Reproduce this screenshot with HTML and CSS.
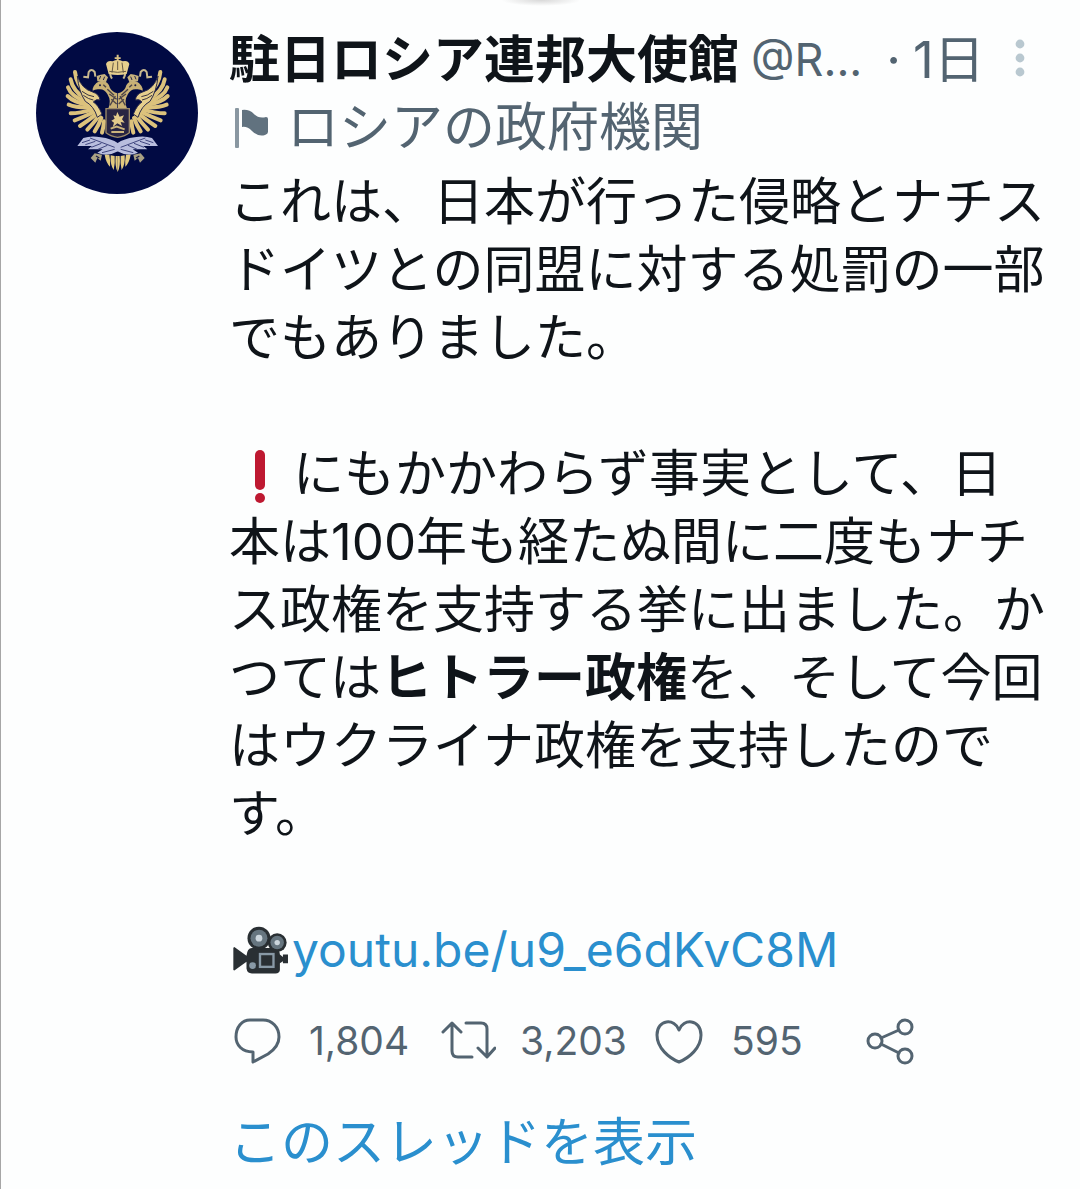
FILE: index.html
```
<!DOCTYPE html>
<html lang="ja">
<head>
    <meta charset="UTF-8">
    <meta name="viewport" content="width=device-width, initial-scale=1.0">
    <title>駐日ロシア連邦大使館</title>
    <link rel="stylesheet" href="styles.css">
</head>
<body>
    <article class="tweet">
        <svg class="avatar" viewBox="48 36 486 486" role="img" aria-label="駐日ロシア連邦大使館">
            <defs>
                <g id="eagle-half">
                    <!-- wing feathers -->
                    <g fill="none" stroke="#dcc27c" stroke-width="12" stroke-linecap="round">
                        <path d="M165 156 Q168 194 204 226"/>
                        <path d="M152 178 Q158 212 196 236"/>
                        <path d="M144 202 Q154 230 200 246"/>
                        <path d="M143 228 Q162 248 206 254"/>
                        <path d="M146 254 Q170 264 214 262"/>
                        <path d="M152 280 Q178 280 220 268"/>
                        <path d="M164 301 Q190 292 226 274"/>
                        <path d="M180 318 Q204 302 232 280"/>
                        <path d="M202 329 Q220 310 238 286"/>
                        <path d="M224 334 Q236 316 244 294"/>
                        <path d="M246 338 Q250 324 252 304"/>
                    </g>
                    <path d="M172 168 Q184 206 218 216 Q238 222 240 240 Q228 236 220 246 Q234 254 246 282 L232 292 Q222 258 196 244 Q176 214 172 168Z" fill="#e6cf8d" stroke="#2a2a4a" stroke-width="3"/>
                    <path d="M186 214 Q204 228 222 230 M190 226 Q206 238 220 240" fill="none" stroke="#3b3540" stroke-width="3"/>
                    <!-- head and neck -->
                    <path d="M218 206 Q226 184 246 182 Q266 184 270 204 Q276 216 292 220 L292 268 L264 268 Q276 244 262 222 Q254 208 240 208 Q226 206 218 212Z" fill="#c9b175"/>
                    <path d="M250 194 L258 202 M262 208 L282 226 M268 222 L290 238 M274 238 L290 252 M286 228 L270 256" stroke="#4b4348" stroke-width="4"/>
                    <path d="M232 184 L230 168 L242 164 L254 162 L264 172 L258 186Z" fill="#c8b37e"/>
                    <path d="M238 178 L242 168 M250 180 L254 170" stroke="#2a2a4a" stroke-width="3"/>
                    <circle cx="240" cy="196" r="3" fill="#1b1c45"/>
                    <!-- ribbon -->
                    <path d="M190 170 L204 172 L206 156 Q214 144 224 156 L226 170 M272 150 Q268 164 276 176" fill="none" stroke="#c8b98f" stroke-width="6"/>
                    <!-- palm branch -->
                    <path d="M172 378 L190 354 Q214 346 242 352 Q274 356 294 370 L294 394 Q262 412 232 398 L248 388 L204 388 L216 378Z" fill="#b9bede"/>
                    <path d="M186 368 L210 360 M196 374 L226 364 M214 382 L244 370 M234 388 L262 376 M210 354 L284 382 M246 398 L284 388" stroke="#40467f" stroke-width="3"/>
                    <!-- claw and tail -->
                    <path d="M212 414 L224 400 L246 404 L242 422 L232 414 L226 428Z" fill="#a9a083"/>
                    <path d="M228 408 L238 414" stroke="#1b1c45" stroke-width="4"/>
                    <path d="M254 404 Q258 428 270 440 Q272 424 268 404Z M272 406 Q270 434 281 450 Q286 430 284 408Z M287 408 L293 408 L293 456 Q284 440 287 408Z" fill="#e2c97f"/>
                </g>
            </defs>
            <circle cx="291" cy="279" r="243" fill="#010a43"/>
            <use href="#eagle-half"/>
            <use href="#eagle-half" transform="translate(586 0) scale(-1 1)"/>
            <!-- crown -->
            <path d="M290 104 H296 V112 H302 V117 H296 V124 H290 V117 H284 V112 H290Z" fill="#d8c184"/>
            <path d="M258 132 Q262 120 278 124 Q293 116 308 124 Q324 120 328 132 L320 162 Q293 168 266 162Z" fill="#e6cf8d"/>
            <path d="M280 128 L276 158 M293 124 V150 M306 128 L310 158 M268 154 Q293 160 318 154" fill="none" stroke="#675a45" stroke-width="3"/>
            <!-- shield -->
            <path d="M258 266 H328 V338 Q316 348 293 352 Q270 348 258 338Z" fill="#282443" stroke="#9c8a68" stroke-width="4"/>
            <path d="M274 302 L284 296 L280 286 L288 288 L292 276 L299 290 L312 286 L306 298 L314 308 L302 306 L306 318 L292 310 L278 322 L282 308Z" fill="#e3ca8b"/>
            <path d="M272 326 L290 320 L314 328 M274 336 H312" fill="none" stroke="#cbb47d" stroke-width="6"/>
        </svg>

        <div class="content">
            <header class="header">
                <span class="name">駐日ロシア連邦大使館</span>
                <span class="handle">@R...</span>
                <span class="dot">·</span>
                <span class="time">1日</span>
                <button class="more" type="button" aria-label="その他">
                    <svg viewBox="0 0 10 38">
                        <circle cx="5" cy="5" r="4.4"/>
                        <circle cx="5" cy="19" r="4.4"/>
                        <circle cx="5" cy="33" r="4.4"/>
                    </svg>
                </button>
            </header>

            <p class="label">
                <svg class="flag" viewBox="0 0 38 42">
                    <rect x="2" y="1" width="4" height="40" rx="1" fill="#8997a1"/>
                    <path d="M9 3 Q16 2 21 7 Q26 12 33 10 Q35 10 35 12 V25 Q35 27 32 28 Q25 30 19 24 Q14 19 9 20Z"/>
                </svg>
                <span>ロシアの政府機関</span>
            </p>

            <div class="text">
                <p>これは、日本が行った侵略とナチスドイツとの同盟に対する処罰の一部でもありました。</p>
                <p><svg class="emoji" viewBox="0 0 64 56" role="img" aria-label="!"><rect x="26" y="2" width="10" height="40" rx="5" fill="#be1931"/><circle cx="31" cy="50" r="5" fill="#be1931"/></svg>にもかかわらず事実として、日本は100年も経たぬ間に二度もナチス政権を支持する挙に出ました。かつては<b>ヒトラー政権</b>を、そして今回はウクライナ政権を支持したのです。</p>
                <p class="video">
                    <svg class="camera" viewBox="40 54 166 142">
                        <path d="M41 118 L44 116 L80 142 Q82 120 96 119 H164 Q178 120 179 138 L188 146 V138 H203 V164 H188 V158 L179 164 V184 Q178 194 166 195 H96 Q82 194 80 180 V160 L44 186 L41 184Z" fill="#292f33"/>
                        <circle cx="117" cy="90" r="34" fill="#292f33"/>
                        <circle cx="171" cy="103" r="28" fill="#292f33"/>
                        <circle cx="117" cy="90" r="25" fill="#66757f"/>
                        <circle cx="171" cy="103" r="20" fill="#66757f"/>
                        <circle cx="117" cy="90" r="10" fill="#ccd6dd"/>
                        <circle cx="171" cy="103" r="8" fill="#ccd6dd"/>
                        <rect x="120" y="137" width="40" height="38" fill="#292f33" stroke="#8899a6" stroke-width="7"/>
                        <circle cx="98" cy="171" r="10" fill="#8899a6"/>
                    </svg><a href="#">youtu.be/u9_e6dKvC8M</a>
                </p>
            </div>

            <div class="actions">
                <button class="action" type="button" aria-label="返信 1,804">
                    <svg viewBox="0 0 56 56"><path d="M21 7 H34 C43 7 50 14 50 24 C50 32 45 37 39 41 L24 49 V39 C13 39 7 32 7 24 C7 14 13 7 21 7Z"/></svg>
                    <span>1,804</span>
                </button>
                <button class="action" type="button" aria-label="リツイート 3,203">
                    <svg viewBox="0 0 56 56"><path d="M3 19 L12 10 L21 19 M12 11 V38 Q12 44 18 44 H32 M26 10 H41 Q47 10 47 16 V43 M38 35 L47 44 L55 35"/></svg>
                    <span>3,203</span>
                </button>
                <button class="action" type="button" aria-label="いいね 595">
                    <svg viewBox="0 0 56 56"><path d="M28 17 C24 5 6 6 6 22 C6 35 18 45 28 49 C38 45 50 35 50 22 C50 6 32 5 28 17Z"/></svg>
                    <span>595</span>
                </button>
                <button class="action" type="button" aria-label="共有">
                    <svg viewBox="0 0 56 56"><circle cx="13" cy="28" r="7"/><circle cx="43" cy="14" r="7"/><circle cx="43" cy="43" r="7"/><path d="M19 25 L37 17 M19 31 L37 40"/></svg>
                </button>
            </div>

            <a class="thread" href="#">このスレッドを表示</a>
        </div>
    </article>
</body>
</html>
```

FILE: styles.css
```
* {
    margin: 0;
    padding: 0;
    box-sizing: border-box;
}

body {
    position: relative;
    min-height: 100vh;
    border-left: 1px solid #a6a6a6;
    background-color: #fdfefe;
    color: #0f1419;
    font-family: Inter, "Noto Sans CJK JP", sans-serif;
    font-size: 51px;
    line-height: 68px;
    overflow-x: hidden;
}

/* soft shadow peeking in from the top edge */
body::before {
    content: "";
    position: absolute;
    top: 0;
    left: 50%;
    width: 80px;
    height: 6px;
    margin-left: -40px;
    background: radial-gradient(ellipse at top, #d8d8d8, transparent 70%);
}

a {
    color: #2a8fce;
    text-decoration: none;
}

button {
    border: none;
    background: none;
    color: inherit;
    font-family: inherit;
    cursor: pointer;
}

.tweet {
    display: flex;
    gap: 31px;
    padding: 26px 31px 0 35px;
}

.avatar {
    flex: none;
    width: 162px;
    height: 162px;
    margin-top: 6px;
}

.content {
    flex: 1;
    min-width: 0;
}

.header {
    display: flex;
    align-items: center;
    color: #536471;
    white-space: nowrap;
}

.name {
    color: #0f1419;
    font-weight: bold;
}

.handle {
    margin-left: 12px;
    font-size: 45px;
}

.dot {
    margin-left: 24px;
}

.time {
    margin-left: 12px;
}

.more {
    display: flex;
    margin-left: auto;
    padding: 0 24px 4px;
}

.more svg {
    width: 10px;
    height: 38px;
    fill: #b9c8d0;
}

.label {
    display: flex;
    align-items: center;
    gap: 16px;
    color: #536471;
    font-size: 52px;
}

.flag {
    width: 38px;
    height: 42px;
    margin-left: 4px;
    fill: #61727f;
}

.text {
    margin-top: 6px;
}

.text p + p {
    margin-top: 68px;
}

.emoji {
    width: 64px;
    height: 56px;
    vertical-align: -12px;
}

.video {
    display: flex;
    align-items: center;
    font-size: 48px;
}

.camera {
    flex: none;
    width: 56px;
    height: 48px;
    margin-left: 4px;
    margin-right: 3px;
}

.actions {
    display: flex;
    margin-top: 29px;
}

.action {
    display: flex;
    flex: none;
    align-items: center;
    gap: 24px;
    width: 211px;
    color: #536471;
    font-size: 39px;
    line-height: 56px;
}

.action:last-child {
    width: auto;
}

.action svg {
    flex: none;
    width: 56px;
    height: 56px;
    fill: none;
    stroke: #536471;
    stroke-width: 3;
    stroke-linecap: round;
    stroke-linejoin: round;
}

.thread {
    display: block;
    margin-top: 40px;
    font-size: 52px;
}
```
